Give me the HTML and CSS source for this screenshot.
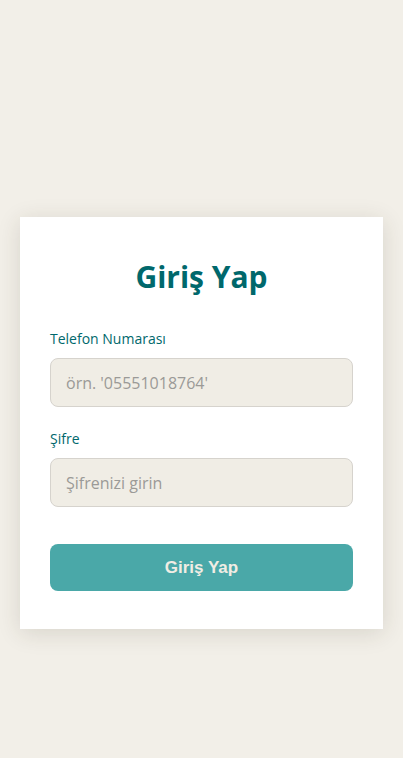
FILE: index.html
```html
<!DOCTYPE html>
<html lang="tr">
<head>
<meta charset="utf-8">
<title>Giriş Yap</title>
<link rel="stylesheet" href="styles.css">
</head>
<body>
<main class="page">
  <form class="card">
    <h2 class="title">Giriş Yap</h2>
    <div class="group">
      <label class="label" for="tel">Telefon Numarası</label>
      <input class="input" id="tel" type="text" placeholder="örn. '05551018764'">
    </div>
    <div class="group">
      <label class="label" for="pw">Şifre</label>
      <input class="input" id="pw" type="password" placeholder="Şifrenizi girin">
    </div>
    <button class="btn" type="button">Giriş Yap</button>
  </form>
</main>
</body>
</html>
```

FILE: styles.css
```css
* { box-sizing: border-box; }
html, body { margin: 0; padding: 0; }
body {
  background: #f2efe8;
  font-family: "Open Sans", "DejaVu Sans", sans-serif;
  min-height: 758px;
}
.page {
  padding-top: 217px;
  display: flex;
  justify-content: center;
}
.card {
  width: 363px;
  background: #ffffff;
  padding: 40px 30px 38px;
  box-shadow: 0 4px 22px rgba(60, 50, 30, 0.14);
  display: flex;
  flex-direction: column;
}
.title {
  margin: 0 0 32px;
  text-align: center;
  color: #00686c;
  font-size: 30px;
  line-height: 40px;
  font-weight: 700;
}
.group {
  display: flex;
  flex-direction: column;
  margin-bottom: 22px;
}
.group + .group { margin-bottom: 37px; }
.label {
  font-size: 14px;
  line-height: 20px;
  color: #00686c;
  margin-bottom: 9px;
}
.input {
  height: 49px;
  border: 1px solid #d6d3cd;
  border-radius: 8px;
  background: #f0ede5;
  padding: 0 15px;
  font-family: "Open Sans", "DejaVu Sans", sans-serif;
  font-size: 16px;
  color: #333;
  outline: none;
}
.input::placeholder { color: #9b9a97; }
.btn {
  height: 47px;
  border: none;
  border-radius: 8px;
  background: #4aa8a8;
  color: #f1ede4;
  font-family: "Liberation Sans", Arial, sans-serif;
  font-weight: 700;
  font-size: 17px;
}
```
